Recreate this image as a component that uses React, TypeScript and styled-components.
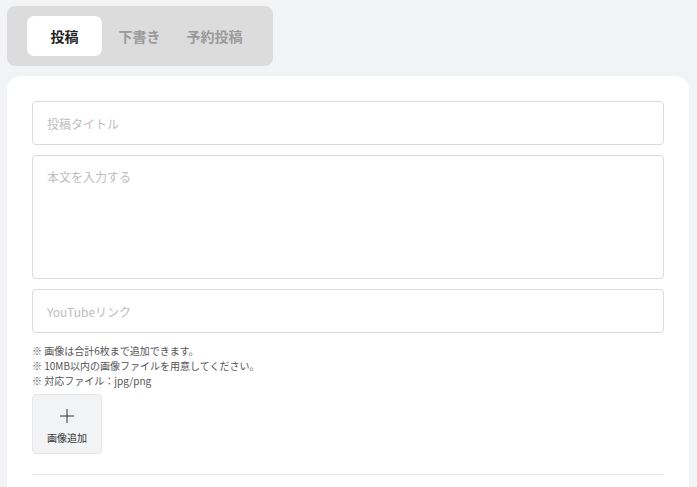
import React, { useState } from "react";
import styled, { createGlobalStyle } from "styled-components";

const TABS = ["投稿", "下書き", "予約投稿"];

const NOTES = [
  "※ 画像は合計6枚まで追加できます。",
  "※ 10MB以内の画像ファイルを用意してください。",
  "※ 対応ファイル：jpg/png",
];

const App = () => {
  const [active, setActive] = useState(0);

  return (
    <>
      <GlobalStyle />
      <Page>
        <TabBar>
          {TABS.map((label, i) => (
            <Tab key={label} $active={i === active} onClick={() => setActive(i)}>
              {label}
            </Tab>
          ))}
        </TabBar>

        <Card>
          <TextInput placeholder="投稿タイトル" />
          <TextArea placeholder="本文を入力する" />
          <TextInput placeholder="YouTubeリンク" />

          <Notes>
            {NOTES.map((n) => (
              <li key={n}>{n}</li>
            ))}
          </Notes>

          <AddImage type="button">
            <svg width="16" height="16" viewBox="0 0 16 16" fill="none">
              <path d="M8 1v14M1 8h14" stroke="#333" strokeWidth="1" />
            </svg>
            <span>画像追加</span>
          </AddImage>

          <Divider />
        </Card>
      </Page>
    </>
  );
};

export default App;

const GlobalStyle = createGlobalStyle`
  html, body {
    margin: 0;
    padding: 0;
    background: #f2f3f5;
    font-family: "Noto Sans CJK JP", "Noto Sans", sans-serif;
  }
  * {
    box-sizing: border-box;
  }
`;

const Page = styled.div`
  display: flex;
  flex-direction: column;
  align-items: flex-start;
  gap: 10px;
  padding: 6px 8px 0 7px;
  min-height: 487px;
`;

const TabBar = styled.div`
  display: flex;
  width: 266px;
  height: 60px;
  padding: 10px 20px;
  background: #dcdcdc;
  border-radius: 8px;
`;

const Tab = styled.button<{ $active: boolean }>`
  width: 75px;
  height: 40px;
  border: none;
  border-radius: 7px;
  font-family: inherit;
  font-size: 14px;
  font-weight: 700;
  cursor: pointer;
  background: ${({ $active }) => ($active ? "#fff" : "transparent")};
  color: ${({ $active }) => ($active ? "#222" : "#9a9a9a")};
  padding: 0;
`;

const Card = styled.div`
  width: 682px;
  flex: 1;
  background: #fff;
  border-radius: 14px 14px 0 0;
  padding: 25px 25px 12px;
  display: flex;
  flex-direction: column;
  gap: 10px;
`;

const fieldStyle = `
  width: 100%;
  border: 1px solid #dcdcdc;
  border-radius: 4px;
  padding: 0 14px;
  font-family: inherit;
  font-size: 12px;
  color: #333;
  background: #fff;
  outline: none;
  &::placeholder {
    color: #bdbdbd;
  }
`;

const TextInput = styled.input`
  ${fieldStyle}
  height: 44px;
`;

const TextArea = styled.textarea`
  ${fieldStyle}
  height: 124px;
  padding-top: 12px;
  resize: none;
  line-height: 18px;
`;

const Notes = styled.ul`
  list-style: none;
  margin: 0;
  padding: 0;
  font-size: 10px;
  line-height: 15px;
  color: #555;
`;

const AddImage = styled.button`
  width: 70px;
  height: 60px;
  margin-top: -4px;
  border: 1px solid #e6e7ea;
  border-radius: 4px;
  background: #f2f3f5;
  display: flex;
  flex-direction: column;
  align-items: center;
  justify-content: center;
  gap: 6px;
  padding: 4px 0 0;
  font-family: inherit;
  font-size: 10px;
  color: #333;
  cursor: pointer;
`;

const Divider = styled.hr`
  width: 100%;
  margin: 10px 0 0;
  border: none;
  border-top: 1px solid #e6e6e6;
`;
